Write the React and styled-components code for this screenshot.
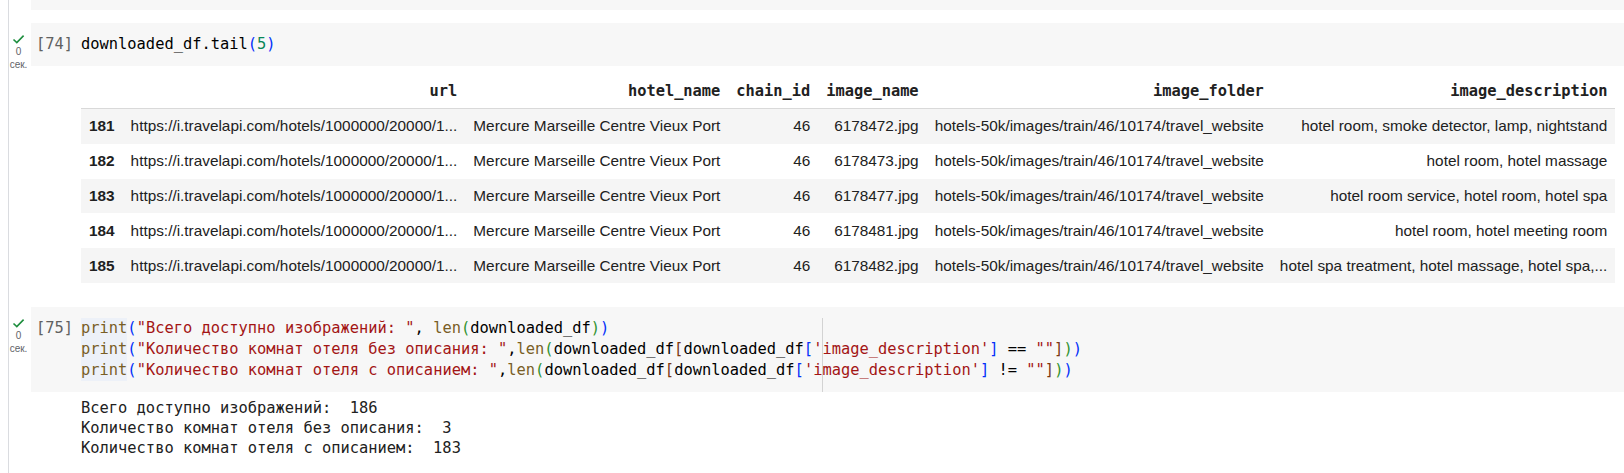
import React from 'react';
import styled, {createGlobalStyle} from 'styled-components';

const cellBg = '#f7f7f7';
const mono = '"DejaVu Sans Mono", "Liberation Mono", monospace';
const sans = '"Liberation Sans", Arial, sans-serif';

const GlobalStyle = createGlobalStyle `
  html, body {
    margin: 0;
    padding: 0;
    background: #ffffff;
    overflow: hidden;
  }
`;

const Notebook = styled.div `
  margin-left: 8px;
  border-left: 1px solid #dadce0;
  min-height: 473px;
  width: 1615px;
`;

const PrevCell = styled.div `
  margin-left: 22px;
  height: 10px;
  background: ${cellBg};
  position: relative;
  padding-left: 50px;
`;

const Cell = styled.div `
  display: flex;
  align-items: flex-start;
  margin-top: ${props => `${props.top}px`};
`;

const Gutter = styled.div `
  width: 19px;
  padding-right: 3px;
  padding-top: 10px;
  margin-bottom: -8px;
  display: flex;
  flex-direction: column;
  align-items: center;
  font-family: ${sans};
  font-size: 10px;
  color: #5f6368;
  svg {
    display: block;
  }
`;

const GutterText = styled.div `
  line-height: 13px;
`;

const CodeBox = styled.div `
  flex: 1;
  display: flex;
  background: ${cellBg};
  padding: 11px 0 11px 5px;
  font-family: ${mono};
  font-size: 15.4px;
  line-height: 21px;
  color: #000000;
`;

const Prompt = styled.div `
  width: 45px;
  color: #616161;
  white-space: pre;
`;

const Code = styled.div `
  position: relative;
  white-space: pre;
  font-family: ${mono};
  font-size: 15.4px;
`;

const Ruler = styled.div `
  position: absolute;
  left: 80ch;
  top: ${props => `${props.top || 0}px`};
  bottom: ${props => `${props.bottom || 0}px`};
  width: 1px;
  background: #d3d3d3;
`;

const WordMark = styled.div `
  position: absolute;
  left: 0;
  top: 0;
  width: 5ch;
  height: ${props => `${props.lines * 21}px`};
  background: #edf1f8;
`;

const Line = styled.div `
  position: relative;
`;

const Tok = styled.span `
  color: ${props => props.c};
`;

const Output = styled.div `
  padding: ${props => `${props.top}px 0 ${props.bottom}px 72px`};
`;

const Table = styled.table `
  border-collapse: collapse;
  font-family: ${sans};
  font-size: 15.35px;
  color: #212121;
  white-space: nowrap;
`;

const Th = styled.th `
  font-family: ${mono};
  font-weight: bold;
  text-align: right;
  padding: 0 8px;
  height: 34px;
  border-bottom: 1px solid #d9d9d9;
`;

const Row = styled.tr `
  background: ${props => props.odd ? '#f5f5f5' : '#ffffff'};
`;

const IndexCell = styled.th `
  font-weight: bold;
  text-align: left;
  padding: 0 8px;
  height: 34.8px;
`;

const Td = styled.td `
  text-align: right;
  padding: 0 8px;
  height: 34.8px;
`;

const Stdout = styled.pre `
  margin: 0;
  font-family: ${mono};
  font-size: 15.4px;
  line-height: 20px;
  color: #212121;
`;

const colors = {
  fn: '#795e26',
  str: '#a31515',
  num: '#098658',
  b1: '#0431fa',
  b2: '#319331',
  b3: '#7b3814'
};

const CheckIcon = () => (
  <svg width="13" height="12" viewBox="0 0 13 12">
    <path d="M1.5 6.5 L4.8 9.6 L11.6 2.6" fill="none" stroke="#1e8e3e" strokeWidth="1.6" />
  </svg>
);

const RunStatus = () => (
  <Gutter>
    <CheckIcon />
    <GutterText>0</GutterText>
    <GutterText>сек.</GutterText>
  </Gutter>
);

const columns = ['url', 'hotel_name', 'chain_id', 'image_name', 'image_folder', 'image_description'];

const url = 'https://i.travelapi.com/hotels/1000000/20000/1...';
const hotel = 'Mercure Marseille Centre Vieux Port';
const folder = 'hotels-50k/images/train/46/10174/travel_website';

const rows = [
  {id: 181, image: '6178472.jpg', desc: 'hotel room, smoke detector, lamp, nightstand'},
  {id: 182, image: '6178473.jpg', desc: 'hotel room, hotel massage'},
  {id: 183, image: '6178477.jpg', desc: 'hotel room service, hotel room, hotel spa'},
  {id: 184, image: '6178481.jpg', desc: 'hotel room, hotel meeting room'},
  {id: 185, image: '6178482.jpg', desc: 'hotel spa treatment, hotel massage, hotel spa,...'}
];

const PrintLine = ({text, cond}) => (
  <Line>
    <Tok c={colors.fn}>print</Tok>
    <Tok c={colors.b1}>(</Tok>
    <Tok c={colors.str}>{`"${text}"`}</Tok>
    {cond ? ',' : ', '}
    <Tok c={colors.fn}>len</Tok>
    <Tok c={colors.b2}>(</Tok>
    downloaded_df
    {cond
      ? (
        <>
          <Tok c={colors.b3}>[</Tok>
          downloaded_df
          <Tok c={colors.b1}>[</Tok>
          <Tok c={colors.str}>'image_description'</Tok>
          <Tok c={colors.b1}>]</Tok>
          {` ${cond} `}
          <Tok c={colors.str}>""</Tok>
          <Tok c={colors.b3}>]</Tok>
        </>
      )
      : null}
    <Tok c={colors.b2}>)</Tok>
    <Tok c={colors.b1}>)</Tok>
  </Line>
);

const App = () => (
  <>
    <GlobalStyle />
    <Notebook>
      <PrevCell>
        <Code>
          <Ruler />
        </Code>
      </PrevCell>

      <Cell top={13}>
        <RunStatus />
        <CodeBox>
          <Prompt>[74]</Prompt>
          <Code>
            downloaded_df.tail<Tok c={colors.b1}>(</Tok><Tok c={colors.num}>5</Tok><Tok c={colors.b1}>)</Tok>
          </Code>
        </CodeBox>
      </Cell>

      <Output top={8} bottom={24}>
        <Table>
          <thead>
            <tr>
              <Th />
              {columns.map(col => <Th key={col}>{col}</Th>)}
            </tr>
          </thead>
          <tbody>
            {rows.map((row, i) => (
              <Row key={row.id} odd={i % 2 === 0}>
                <IndexCell>{row.id}</IndexCell>
                <Td>{url}</Td>
                <Td>{hotel}</Td>
                <Td>46</Td>
                <Td>{row.image}</Td>
                <Td>{folder}</Td>
                <Td>{row.desc}</Td>
              </Row>
            ))}
          </tbody>
        </Table>
      </Output>

      <Cell top={0}>
        <RunStatus />
        <CodeBox>
          <Prompt>[75]</Prompt>
          <Code>
            <WordMark lines={3} />
            <Ruler bottom={-11} />
            <PrintLine text="Всего доступно изображений: " />
            <PrintLine text="Количество комнат отеля без описания: " cond="==" />
            <PrintLine text="Количество комнат отеля с описанием: " cond="!=" />
          </Code>
        </CodeBox>
      </Cell>

      <Output top={6} bottom={0}>
        <Stdout>{`Всего доступно изображений:  186
Количество комнат отеля без описания:  3
Количество комнат отеля с описанием:  183`}</Stdout>
      </Output>
    </Notebook>
  </>
);

export default App;
